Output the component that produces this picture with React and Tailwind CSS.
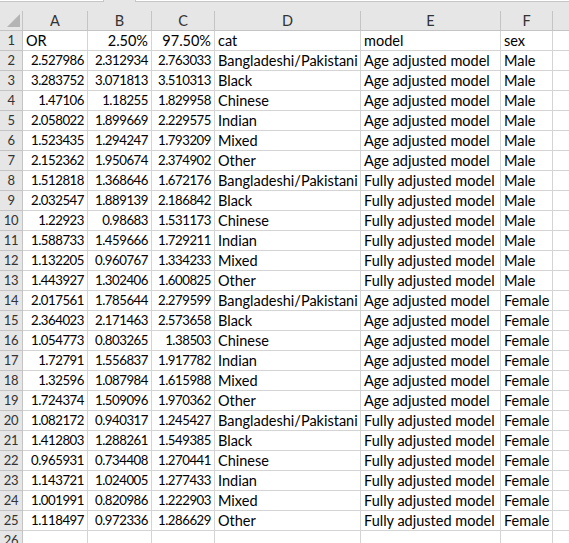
import React from 'react';

const cols = [
  { key: 'A', w: 'w-[65px]' },
  { key: 'B', w: 'w-[64px]' },
  { key: 'C', w: 'w-[63px]' },
  { key: 'D', w: 'w-[146px]' },
  { key: 'E', w: 'w-[140px]' },
  { key: 'F', w: 'w-[52px]' },
];

const cats = ['Bangladeshi/Pakistani', 'Black', 'Chinese', 'Indian', 'Mixed', 'Other'];

const nums = [
  ['2.527986', '2.312934', '2.763033'],
  ['3.283752', '3.071813', '3.510313'],
  ['1.47106', '1.18255', '1.829958'],
  ['2.058022', '1.899669', '2.229575'],
  ['1.523435', '1.294247', '1.793209'],
  ['2.152362', '1.950674', '2.374902'],
  ['1.512818', '1.368646', '1.672176'],
  ['2.032547', '1.889139', '2.186842'],
  ['1.22923', '0.98683', '1.531173'],
  ['1.588733', '1.459666', '1.729211'],
  ['1.132205', '0.960767', '1.334233'],
  ['1.443927', '1.302406', '1.600825'],
  ['2.017561', '1.785644', '2.279599'],
  ['2.364023', '2.171463', '2.573658'],
  ['1.054773', '0.803265', '1.38503'],
  ['1.72791', '1.556837', '1.917782'],
  ['1.32596', '1.087984', '1.615988'],
  ['1.724374', '1.509096', '1.970362'],
  ['1.082172', '0.940317', '1.245427'],
  ['1.412803', '1.288261', '1.549385'],
  ['0.965931', '0.734408', '1.270441'],
  ['1.143721', '1.024005', '1.277433'],
  ['1.001991', '0.820986', '1.222903'],
  ['1.118497', '0.972336', '1.286629'],
];

const rows = nums.map((n, i) => [
  ...n,
  cats[i % 6],
  Math.floor(i / 6) % 2 === 0 ? 'Age adjusted model' : 'Fully adjusted model',
  i < 12 ? 'Male' : 'Female',
]);

function Cell({ w, right, numeric, children }) {
  return (
    <div
      className={`${w} h-[20px] shrink-0 border-r border-b border-[#d4d4d4] flex items-center overflow-hidden whitespace-nowrap ${right ? 'justify-end pr-[3px]' : 'justify-start pl-[3px]'} ${numeric ? 'text-[13.2px] tracking-[-0.45px]' : ''}`}
    >
      {children}
    </div>
  );
}

function Row({ num, values }) {
  const header = num === 1;
  return (
    <div className="flex">
      <div className="w-[23px] h-[20px] shrink-0 bg-[#e6e6e6] border-r border-b border-[#c4c4c4] flex items-center justify-center text-[#333] text-[13px] tracking-[-0.3px]">
        {num}
      </div>
      {cols.map((c, i) => (
        <Cell
          key={c.key}
          w={c.w}
          right={header ? i === 1 || i === 2 : i < 3}
          numeric={!header && i < 3}
        >
          {values ? values[i] : ''}
        </Cell>
      ))}
      <div className="flex-1 h-[20px] border-b border-[#d4d4d4]" />
    </div>
  );
}

export default function App() {
  return (
    <div
      className="w-[569px] h-[543px] overflow-hidden bg-white text-black text-[14.5px]"
      style={{ fontFamily: 'Lato, "Open Sans", sans-serif' }}
    >
      {/* formula bar remnant */}
      <div className="h-[11px] bg-[#e6e6e6] relative">
        <div className="absolute left-0 top-0 w-[104px] h-[2px] bg-white border-b border-r border-[#c6c6c6]" />
        <div className="absolute left-[135px] right-0 top-0 h-[2px] bg-white border-b border-l border-[#c6c6c6]" />
      </div>
      {/* column headers */}
      <div className="flex bg-[#e6e6e6] text-[#333]">
        <div className="w-[23px] h-[20px] shrink-0 border-r border-b border-[#c4c4c4] relative">
          <svg className="absolute right-[2px] bottom-[3px]" width="13" height="13" viewBox="0 0 13 13">
            <polygon points="13,0 13,13 0,13" fill="#b4b4b4" />
          </svg>
        </div>
        {cols.map((c) => (
          <div key={c.key} className={`${c.w} h-[20px] shrink-0 border-r border-b border-[#c4c4c4] flex items-center justify-center`}>
            {c.key}
          </div>
        ))}
        <div className="flex-1 h-[20px] border-b border-[#c4c4c4]" />
      </div>
      <Row num={1} values={['OR', '2.50%', '97.50%', 'cat', 'model', 'sex']} />
      {rows.map((r, i) => (
        <Row key={i} num={i + 2} values={r} />
      ))}
      <Row num={26} />
    </div>
  );
}
